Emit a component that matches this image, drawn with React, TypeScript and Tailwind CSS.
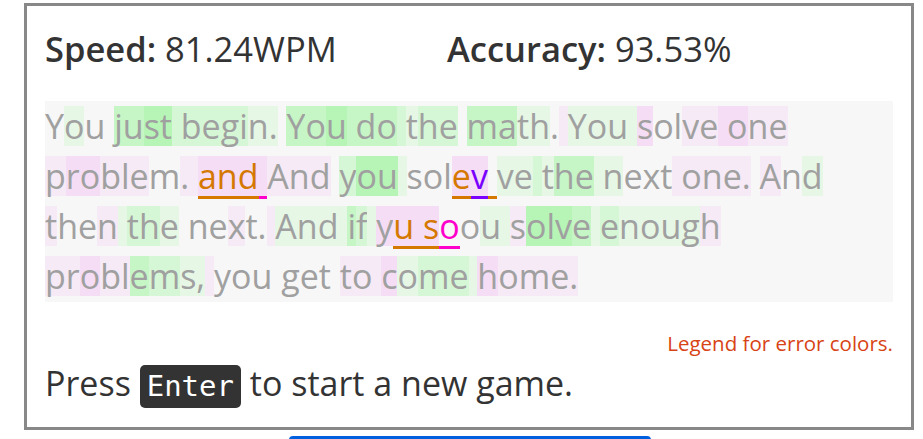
import React from "react";

type Ch = { c: string; bg: string; fg?: string; ul?: string };

const BG: Record<string, string> = {
  ".": "",
  a: "bg-[#e6f7e6]",
  b: "bg-[#d6f7d6]",
  c: "bg-[#c6f5c6]",
  d: "bg-[#b6f5b6]",
  p: "bg-[#f5eaf5]",
  q: "bg-[#f5ddf5]",
};

const ORANGE = "text-[#d47800]";
const PURPLE = "text-[#7a00ff]";
const MAGENTA = "text-[#ff00cc]";
const UL_ORANGE = "border-b-[3px] border-[#d47800]";
const UL_PURPLE = "border-b-[3px] border-[#7a00ff]";
const UL_MAGENTA = "border-b-[3px] border-[#ff00cc]";

// plain typed text, one colour code per character
const seg = (text: string, codes: string): Ch[] =>
  text.split("").map((c, i) => ({ c, bg: BG[codes[i] ?? "."] ?? "" }));

// a mistyped character
const err = (c: string, code: string, fg: string, ul: string): Ch => ({
  c,
  bg: BG[code],
  fg,
  ul,
});

const lines: Ch[][] = [
  seg(
    "You just begin. You do the math. You solve one",
    ".a..ccddbbbbbaa.ccdcccbabb.ccaa.paaaaq..ppqqpp"
  ),
  [
    ...seg("problem. ", "pqqppp.pp"),
    err("a", "q", ORANGE, UL_ORANGE),
    err("n", "q", ORANGE, UL_ORANGE),
    err("d", "q", ORANGE, UL_ORANGE),
    err(" ", "q", ORANGE, UL_MAGENTA),
    ...seg("And you sol", "ppp.bdda..."),
    err("e", "q", ORANGE, UL_ORANGE),
    err("v", "q", PURPLE, UL_PURPLE),
    err(" ", ".", ORANGE, UL_ORANGE),
    ...seg("ve the next one. And", "aabaccaa...ppppp.p.a"),
  ],
  [
    ...seg("then the next. And if y", "p..pabba...p..paaaacbaq"),
    err("u", "q", ORANGE, UL_ORANGE),
    err(" ", "q", ORANGE, UL_ORANGE),
    err("s", "q", ORANGE, UL_ORANGE),
    err("o", ".", MAGENTA, UL_MAGENTA),
    ...seg("ou solve enough", ".aapdddcabaaaap"),
  ],
  seg("problems, you get to come home.", "ppqppcbaap........pppqabbaqpppp"),
];

function Passage() {
  return (
    <div className="mt-[32px] h-[201px] bg-[#f7f7f7] text-[34px] leading-[50px] text-[#a0a0a0]">
      {lines.map((line, i) => (
        <div key={i} className="h-[50px] whitespace-pre">
          {line.map((ch, j) => (
            <span
              key={j}
              className={`inline-block whitespace-pre leading-[40px] ${ch.bg} ${ch.fg ?? ""} ${ch.ul ?? ""}`}
            >
              {ch.c}
            </span>
          ))}
        </div>
      ))}
    </div>
  );
}

export default function App() {
  return (
    <div className="w-[923px] h-[439px] overflow-hidden bg-white pt-[3px] pl-[24px] font-['Open_Sans',sans-serif]">
      <div className="w-[890px] h-[427px] border-[3px] border-[#888888] px-[18px]">
        {/* stats */}
        <div className="flex pt-[23px] text-[34.5px] leading-[40px] text-[#333333]">
          <div className="w-[402px]">
            <span className="font-semibold">Speed:</span> 81.24WPM
          </div>
          <div>
            <span className="font-semibold">Accuracy:</span> 93.53%
          </div>
        </div>

        <Passage />

        <div className="mt-[27px] text-right text-[20.5px] leading-[28px] text-[#d84315]">
          Legend for error colors.
        </div>

        <div className="mt-[4px] text-[34px] leading-[44px] text-[#333333]">
          Press{" "}
          <kbd className="inline-block rounded-[5px] bg-[#333333] px-[7px] font-['DejaVu_Sans_Mono',monospace] text-[29px] leading-[43px] text-white">
            Enter
          </kbd>{" "}
          to start a new game.
        </div>
      </div>
      <div className="ml-[265px] mt-[6px] h-[6px] w-[362px] rounded-t-[4px] bg-[#0060df]" />
    </div>
  );
}
